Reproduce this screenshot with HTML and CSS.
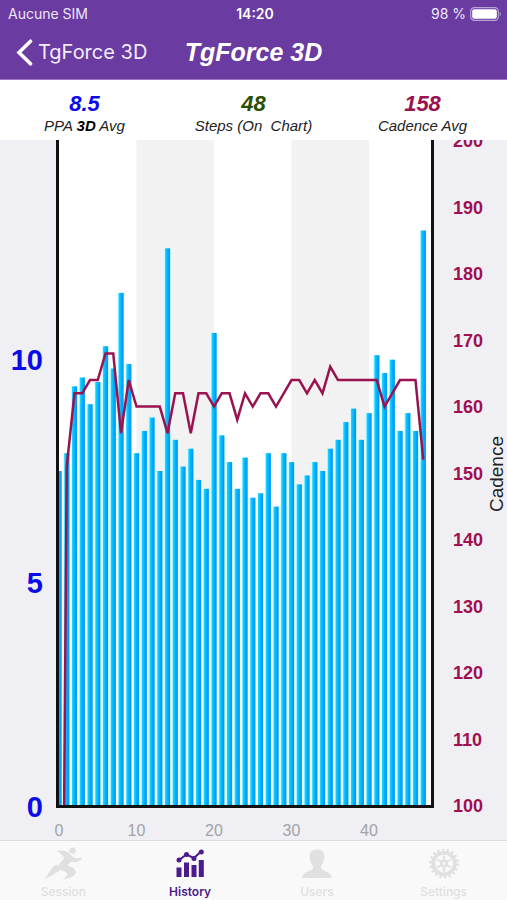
FILE: index.html
```html
<!DOCTYPE html>
<html lang="en">
<head>
<meta charset="utf-8">
<meta name="viewport" content="width=device-width, initial-scale=1">
<title>TgForce 3D</title>
<link rel="stylesheet" href="styles.css">
</head>
<body>
<header class="header">
  <div class="status">
    <span>Aucune SIM</span>
    <span class="status-time">14:20</span>
    <span class="status-battery">98 %
      <svg width="32" height="14" viewBox="0 0 32 14" aria-hidden="true">
        <rect x="0.7" y="0.7" width="27.6" height="12.6" rx="3.6" fill="none" stroke="#b9a2d6" stroke-width="1.2"/>
        <rect x="2.2" y="2.2" width="24.6" height="9.6" rx="2" fill="#fff"/>
        <path d="M29.8 4.8c1.5.7 1.5 3.7 0 4.4z" fill="#b9a2d6"/>
      </svg>
    </span>
  </div>
  <nav class="navbar">
    <a class="back" href="#">
      <svg width="17" height="27" viewBox="0 0 17 27" aria-hidden="true"><path d="M14.5 2.2 3 13.5l11.5 11.3" fill="none" stroke="#fff" stroke-width="3.6" stroke-linecap="round" stroke-linejoin="miter"/></svg>
      <span>TgForce 3D</span>
    </a>
    <h1 class="title">TgForce 3D</h1>
  </nav>
</header>

<section class="stats">
  <div class="stat ppa"><strong>8.5</strong><span>PPA <b>3D</b> Avg</span></div>
  <div class="stat steps"><strong>48</strong><span>Steps (On&nbsp; Chart)</span></div>
  <div class="stat cadence"><strong>158</strong><span>Cadence Avg</span></div>
</section>

<main class="chart">
  <div class="axis-left"><span>10</span><span>5</span><span>0</span></div>
  <div class="plot">
    <svg id="plot" viewBox="0 0 480 666" preserveAspectRatio="none" role="img" aria-label="PPA and cadence per step">
      <defs>
        <linearGradient id="bar">
          <stop offset="0" stop-color="#18dcff"/>
          <stop offset="0.3" stop-color="#06c4ff"/>
          <stop offset="0.6" stop-color="#00a8fa"/>
          <stop offset="1" stop-color="#0894f8"/>
        </linearGradient>
      </defs>
      <rect x="100" width="100" height="666" fill="#f2f2f2"/>
      <rect x="300" width="100" height="666" fill="#f2f2f2"/>
    </svg>
  </div>
  <div class="axis-right">
    <span>200</span><span>190</span><span>180</span><span>170</span><span>160</span><span>150</span><span>140</span><span>130</span><span>120</span><span>110</span><span>100</span>
  </div>
  <div class="axis-name"><span>Cadence</span></div>
  <div class="axis-bottom"><span>0</span><span>10</span><span>20</span><span>30</span><span>40</span></div>
</main>

<nav class="tabs">
  <a class="tab" href="#">
    <svg width="40" height="34" viewBox="0 0 40 34" aria-hidden="true" fill="currentColor">
      <circle cx="29.600" cy="4.600" r="3.200"/>
      <path d="M13.500 5.200C19 3.500 25 5 28 9c2 3 5.500 4.500 11.500 2-1.800 4.500-6.500 6.500-11.500 4.500l-3.500 4c4 1.200 7.500 3 8.200 5.800 1 3.500-3.700 7-12.700 8 3.500-3 5-4.500 4-6-1.800-2.300-6.500-2.500-8.700-5.500-.3-3.500 3.200-6.500 6-9.800-2.500-3.500-4.500-5.500-7.800-6.800z"/>
      <path d="M14.200 18.500c.7 2.500 2.300 4 5 5C14.500 24.500 10 30 1.500 33 6.500 28 8.500 19.500 14.200 18.500z"/>
    </svg>
    <span>Session</span>
  </a>
  <a class="tab active" href="#" aria-current="page">
    <svg width="40" height="34" viewBox="0 0 40 34" aria-hidden="true" fill="currentColor">
      <rect x="6.500" y="21.500" width="5" height="9.500"/><rect x="14" y="16.500" width="5" height="14.500"/><rect x="21.500" y="19" width="5" height="12"/><rect x="28.800" y="14" width="5" height="17"/>
      <path d="m9 14 7.500-5.500 7.500 3.600 7.300-6.800" fill="none" stroke="currentColor" stroke-width="2"/>
      <circle cx="9" cy="14" r="2.500"/><circle cx="16.500" cy="8.600" r="2.500"/><circle cx="24" cy="12.400" r="2.500"/><circle cx="31.300" cy="6" r="2.500"/>
    </svg>
    <span>History</span>
  </a>
  <a class="tab" href="#">
    <svg width="40" height="34" viewBox="0 0 40 34" aria-hidden="true" fill="currentColor">
      <path d="M20 3.500c5 0 7.800 3.200 7.300 8-.4 4.500-2 7-3.300 8.500v2.500c0 2 10.500 2.500 10.700 9.500H5.300C5.500 25 16 24.500 16 22.500V20c-1.300-1.500-2.900-4-3.300-8.500-.5-4.800 2.300-8 7.300-8z"/>
    </svg>
    <span>Users</span>
  </a>
  <a class="tab" href="#">
    <svg width="40" height="34" viewBox="0 0 40 34" aria-hidden="true" fill="none" stroke="currentColor">
      <circle cx="20" cy="17.500" r="13.500" stroke-width="3" stroke-dasharray="2.200 2.512"/>
      <circle cx="20" cy="17.500" r="10.800" stroke-width="3.600"/>
      <circle cx="20" cy="17.500" r="2.800" stroke-width="2.400"/>
      <path stroke-width="1.900" d="M20 14.500v-5M20 20.500v5M17.400 16 13.070 13.500M22.600 19 26.930 21.500M17.400 19 13.070 21.500M22.600 16 26.930 13.500"/>
    </svg>
    <span>Settings</span>
  </a>
</nav>
<script src="chart.js"></script>
</body>
</html>
```
FILE: styles.css
```css
* {
  box-sizing: border-box;
}

body {
  margin: 0;
  min-height: 100vh;
  display: flex;
  flex-direction: column;
  background: #efeff4;
  color: #222;
  font-family: "Liberation Sans", Arial, sans-serif;
}

a {
  color: inherit;
  text-decoration: none;
}

.header {
  background: #6a3ba0;
  border-bottom: 1px solid #9a78c4;
  color: #fff;
}

.status {
  display: grid;
  grid-template-columns: 1fr auto 1fr;
  align-items: center;
  height: 28px;
  padding: 0 5px 0 8px;
  color: #eee6f8;
  font: 14px/28px Inter, sans-serif;
}

.status-time {
  color: #fff;
  font-weight: 600;
}

.status-battery {
  display: flex;
  justify-content: flex-end;
  align-items: center;
  gap: 4px;
}

.navbar {
  display: grid;
  grid-template-columns: 1fr auto 1fr;
  align-items: center;
  height: 51px;
  padding: 0 16px 3px;
}

.back {
  display: flex;
  align-items: center;
  gap: 5px;
  color: #f3ecfb;
  font: 20px/28px Inter, sans-serif;
}

.back svg {
  flex: none;
}

.back span {
  white-space: nowrap;
}

.title {
  margin: 0;
  font-size: 25px;
  line-height: 28px;
  font-style: italic;
}

.stats {
  display: grid;
  grid-template-columns: repeat(3, 1fr);
  height: 60px;
  padding-top: 13px;
  background: #fff;
  text-align: center;
  font-style: italic;
}

.stat strong,
.stat span {
  display: block;
  white-space: nowrap;
}

.stat strong {
  font-size: 22px;
  line-height: 22px;
}

.stat span {
  font-size: 15px;
  line-height: 22px;
}

.stat b {
  color: #000;
}

.ppa strong {
  color: #0b0bea;
}

.steps strong {
  color: #2b5000;
}

.cadence strong {
  color: #991350;
}

.chart {
  flex: 1;
  display: grid;
  grid-template-columns: 56px 1fr 53px 20px;
  grid-template-rows: 1fr 32px;
  overflow: hidden;
}

.plot {
  position: relative;
  min-height: 400px;
  border: solid #111;
  border-width: 0 3px 3px;
  background: #fff;
}

.plot svg {
  position: absolute;
  width: 100%;
  height: 100%;
}

.axis-left {
  display: grid;
  grid-template-rows: 220fr 223fr 223fr;
  align-items: end;
  padding-right: 13px;
  color: #0b0bea;
  font-size: 29px;
  font-weight: bold;
  line-height: 32px;
  text-align: right;
}

.axis-left span {
  margin-bottom: -15px;
}

.axis-right {
  display: flex;
  flex-direction: column;
  justify-content: space-between;
  margin: -9px 0 -8px;
  padding-left: 19px;
  color: #a01050;
  font-size: 18px;
  font-weight: bold;
  line-height: 20px;
}

.axis-name {
  display: flex;
  align-items: center;
  justify-content: center;
  font-size: 19px;
  line-height: 20px;
}

.axis-name span {
  writing-mode: vertical-rl;
  transform: rotate(180deg);
}

.axis-bottom {
  grid-column: 2;
  display: grid;
  grid-template-columns: repeat(4, 10fr) 8fr;
  padding: 0 3px;
  color: #a3a3a7;
  font-size: 16px;
  line-height: 46px;
}

.axis-bottom span {
  display: flex;
  justify-content: center;
  width: 0;
}

.tabs {
  display: grid;
  grid-template-columns: repeat(4, 1fr);
  height: 60px;
  border-top: 1px solid #dcdce0;
  background: #f9f9f9;
}

.tab {
  display: flex;
  flex-direction: column;
  align-items: center;
  gap: 4px;
  padding-top: 5px;
  color: #e0e0e0;
  font: 500 12px/16px Inter, sans-serif;
}

.tab.active {
  color: #4b1a8c;
  font-weight: 600;
}
```
FILE: chart.js
```js
const ppa = [
  7.5, 7.9, 9.4, 9.6, 9.0, 9.5, 10.3, 9.8, 11.5, 9.9, 7.9, 8.4,
  8.7, 7.5, 12.5, 8.2, 7.6, 8.0, 7.3, 7.1, 10.6, 8.3, 7.7, 7.1,
  7.8, 6.9, 7.0, 7.9, 6.7, 7.9, 7.7, 7.2, 7.4, 7.7, 7.5, 8.0,
  8.2, 8.6, 8.9, 8.2, 8.8, 10.1, 9.7, 10.0, 8.4, 8.8, 8.4, 12.9
];
const cadence = [
  0, 151, 162, 162, 164, 164, 168, 168, 156, 164, 160, 160,
  160, 160, 156, 162, 162, 156, 162, 162, 160, 162, 162, 158,
  162, 160, 162, 162, 160, 162, 164, 164, 162, 164, 162, 166,
  164, 164, 164, 164, 164, 164, 160, 162, 164, 164, 164, 152
];

const HEIGHT = 666;
const STEP = 10;
const svg = document.getElementById("plot");

function add(name, attributes) {
  const node = document.createElementNS("http://www.w3.org/2000/svg", name);
  for (const key in attributes) node.setAttribute(key, attributes[key]);
  svg.append(node);
}

ppa.forEach((value, i) => {
  const height = value * 44.6;
  const top = HEIGHT - height;
  add("rect", { x: i * STEP - 4.4, y: top, width: 8.2, height, fill: "#cbfaff" });
  add("rect", { x: i * STEP - 3.2, y: top, width: 6.6, height, fill: "url(#bar)" });
});

add("polyline", {
  points: cadence.map((value, i) => `${i * STEP},${HEIGHT - (value - 100) * 6.65}`).join(" "),
  fill: "none",
  stroke: "#991350",
  "stroke-width": 2.5,
  "vector-effect": "non-scaling-stroke"
});
```
